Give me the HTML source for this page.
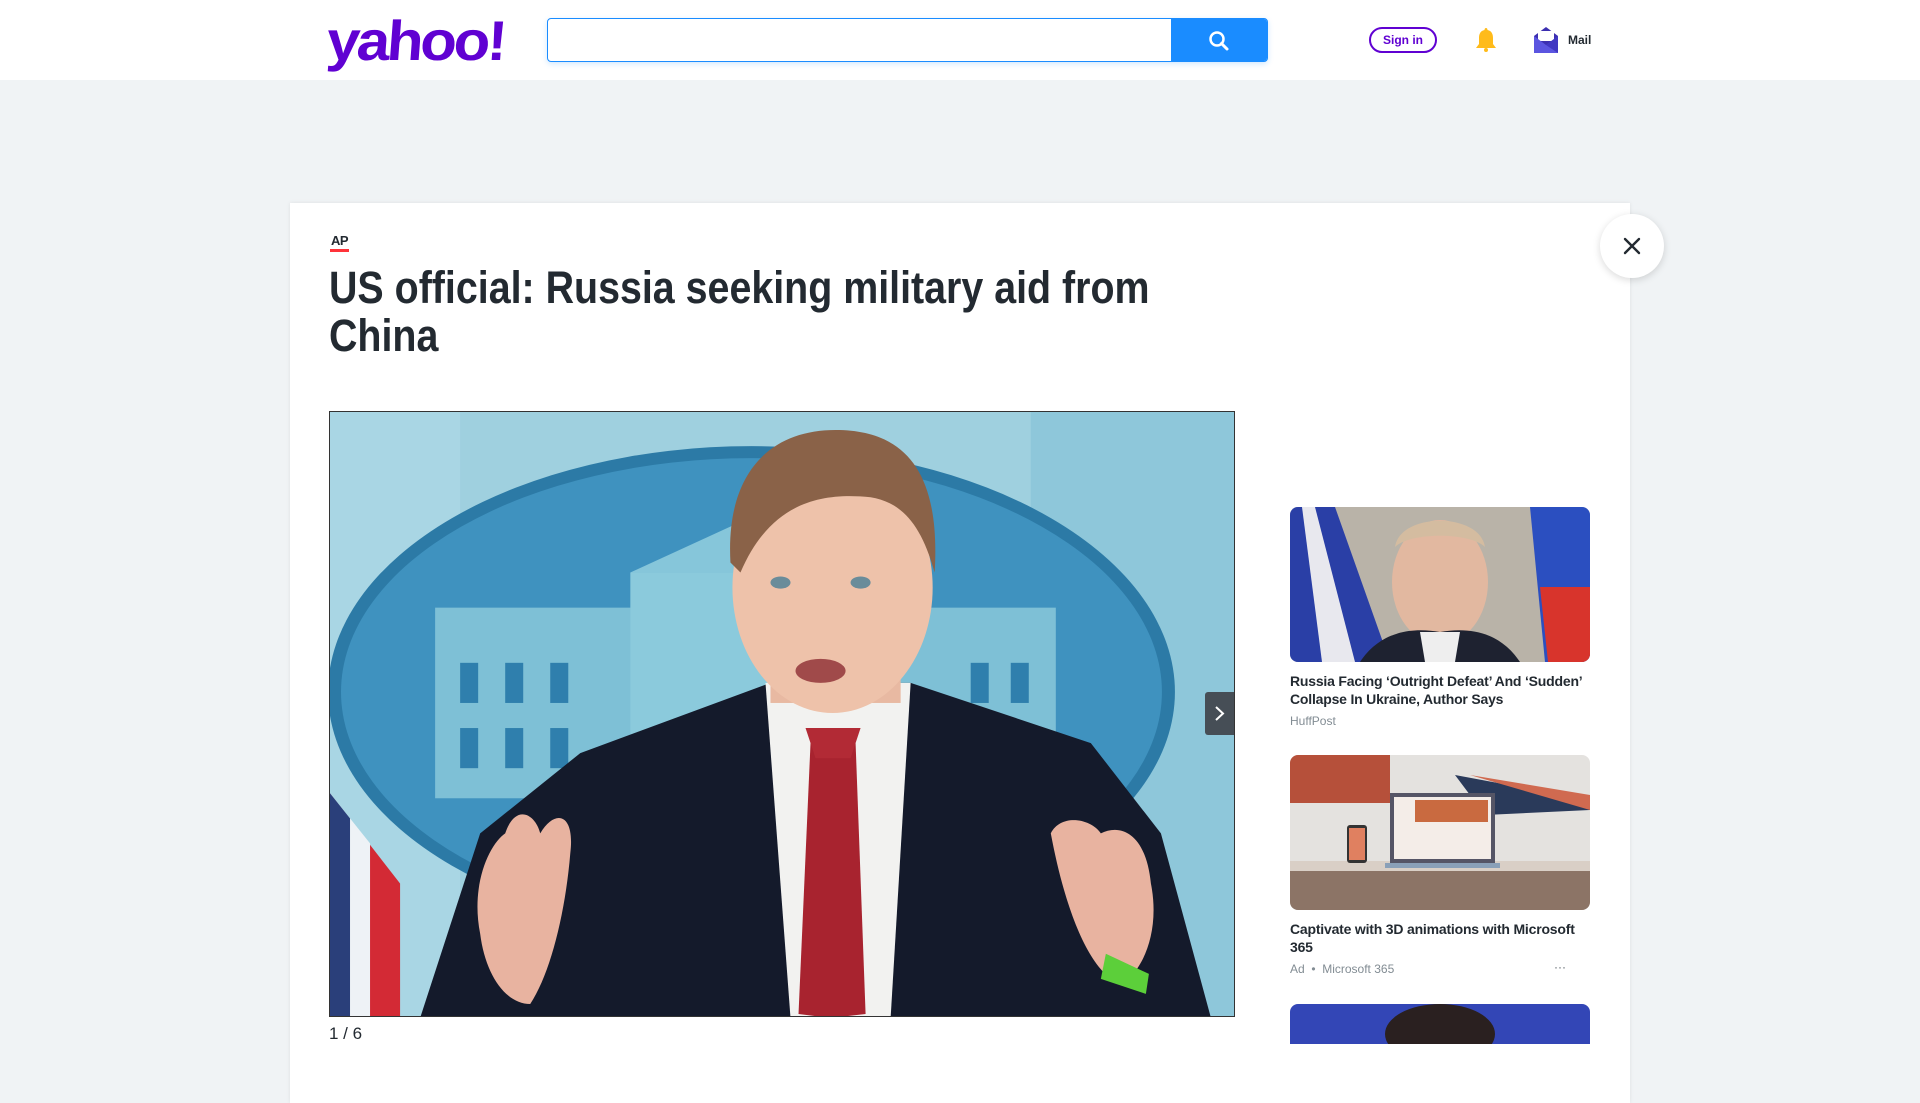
<!DOCTYPE html>
<html><head><meta charset="utf-8"><style>
*{margin:0;padding:0;box-sizing:border-box}
body{width:1920px;height:1040px;overflow:hidden;background:#f0f3f5;font-family:"Liberation Sans",sans-serif;position:relative}
.hdr{position:absolute;left:0;top:0;width:1920px;height:80px;background:#fff}
.logo{position:absolute;left:327px;top:8px;font-family:"Liberation Sans",sans-serif;font-weight:bold;font-size:56px;color:#6001d2;letter-spacing:-3px;transform:scaleX(1.07) skewX(-4deg);transform-origin:left}
.search{position:absolute;left:547px;top:18px;width:721px;height:44px;border:1px solid #1a8cff;border-radius:4px;box-shadow:0 2px 6px rgba(26,140,255,.2);background:#fff;overflow:hidden}
.sbtn{position:absolute;right:0;top:0;width:96px;height:44px;background:#1a8cff}
.signin{position:absolute;left:1369px;top:27px;width:68px;height:26px;border:2px solid #6001d2;border-radius:14px;color:#6001d2;font-size:12px;font-weight:bold;text-align:center;line-height:22px}
.mailt{position:absolute;left:1568px;top:33px;font-size:12px;font-weight:bold;color:#232a31}
.card{position:absolute;left:290px;top:203px;width:1340px;height:900px;background:#fff;box-shadow:0 0 4px rgba(0,0,0,.08)}
.close{position:absolute;left:1600px;top:214px;width:64px;height:64px;border-radius:50%;background:#fff;box-shadow:0 2px 8px rgba(0,0,0,.15)}
.ap{position:absolute;left:331px;top:233px;font-size:13px;font-weight:bold;color:#232a31;letter-spacing:-.5px}
.apl{position:absolute;left:330px;top:249px;width:19px;height:3px;background:#ff333a}
.h1{position:absolute;left:329px;font-weight:bold;font-size:45px;line-height:48px;color:#232a31;white-space:nowrap;transform:scaleX(.875);transform-origin:left}
.photo{position:absolute;left:329px;top:411px;width:906px;height:606px;border:1px solid #333;overflow:hidden}
.arrow{position:absolute;left:1205px;top:692px;width:29px;height:43px;background:#464e56;border-radius:3px 0 0 3px}
.cnt{position:absolute;left:329px;top:1024px;font-size:17px;color:#232a31}
.side{position:absolute;left:1290px;width:300px}
.thumb{border-radius:8px;overflow:hidden;height:155px}
.st{font-size:14px;font-weight:bold;color:#232a31;line-height:18px;margin-top:10px;letter-spacing:-.2px}
.src{font-size:12px;color:#828c93;margin-top:6px}
</style></head><body>
<div class="hdr">
<div class="logo">yahoo!</div>
<div class="search"><div class="sbtn"><svg width="96" height="44"><circle cx="46" cy="20" r="6.5" fill="none" stroke="#fff" stroke-width="2.5"/><path d="M50.5 24.5L56 30" stroke="#fff" stroke-width="3" stroke-linecap="round"/></svg></div></div>
<div class="signin">Sign in</div>
<svg style="position:absolute;left:1472px;top:26px" width="28" height="28"><path d="M14 2c-1 0-1.5 1-1.5 2C8 5 7 8.5 7 12v6l-3 4h20l-3-4v-6c0-3.5-1-7-5.5-8C15.5 3 15 2 14 2z" fill="#ffbb1a"/><rect x="12" y="22" width="4" height="4" rx="2" fill="#ffbb1a"/></svg>
<svg style="position:absolute;left:1533px;top:26px" width="26" height="28"><path d="M1 10L13 1l12 9v17H1z" fill="#3c2fb0"/><rect x="5" y="5" width="16" height="10" fill="#fff"/><path d="M1 10l12 9 12-9v17H1z" fill="#5b55e0"/><path d="M13 19l12-9v17z" fill="#4037c2"/></svg>
<div class="mailt">Mail</div>
</div>
<div class="card"></div>
<div class="close"><svg width="64" height="64"><path d="M25 25l14 14M39 25L25 39" stroke="#232a31" stroke-width="2.4" stroke-linecap="round"/></svg></div>
<div class="ap">AP</div><div class="apl"></div>
<div class="h1" style="top:264px">US official: Russia seeking military aid from</div>
<div class="h1" style="top:312px">China</div>
<div class="photo"><svg width="906" height="606" viewBox="0 0 905 604" preserveAspectRatio="none">
<rect width="905" height="604" fill="#9fd0df"/>
<rect x="0" y="0" width="130" height="604" fill="#a9d6e4"/>
<rect x="700" y="0" width="205" height="604" fill="#8ec7da"/>
<ellipse cx="421" cy="279" rx="423" ry="245" fill="#2c7aa6"/>
<ellipse cx="421" cy="279" rx="410" ry="233" fill="#3f92bf"/>
<rect x="105" y="195" width="620" height="190" fill="#7ec0d6"/>
<path d="M300 160l120-55 120 55z" fill="#86c6da"/>
<rect x="300" y="160" width="240" height="230" fill="#8bcadc"/>
<g fill="#2f7fad"><rect x="130" y="250" width="18" height="40"/><rect x="175" y="250" width="18" height="40"/><rect x="220" y="250" width="18" height="40"/><rect x="130" y="315" width="18" height="40"/><rect x="175" y="315" width="18" height="40"/><rect x="220" y="315" width="18" height="40"/><rect x="640" y="250" width="18" height="40"/><rect x="680" y="250" width="18" height="40"/></g>
<path d="M0 380L70 470V604H0z" fill="#d32a35"/><path d="M0 380L40 430V604H0z" fill="#eef2f6"/><path d="M0 380L20 405V604H0z" fill="#2a3f7a"/>
<path d="M90 604L150 420 250 340 440 270 580 270 760 330 830 420 880 604z" fill="#141a2b"/>
<path d="M435 270L580 270 560 604 460 604z" fill="#f2f2f0"/>
<path d="M480 330L525 330 535 600 500 604 468 600z" fill="#a8232f"/>
<path d="M475 315L530 315 520 345 485 345z" fill="#b22a35"/>
<rect x="440" y="220" width="130" height="70" fill="#e8b9a2"/>
<ellipse cx="502" cy="175" rx="100" ry="125" fill="#eec2aa"/>
<path d="M400 150C395 60 440 18 505 18 575 18 610 60 604 160 590 110 570 90 540 85 490 80 440 90 410 160z" fill="#8a6248"/>
<ellipse cx="450" cy="170" rx="10" ry="6" fill="#6a8c9a"/><ellipse cx="530" cy="170" rx="10" ry="6" fill="#6a8c9a"/>
<ellipse cx="490" cy="258" rx="25" ry="12" fill="#a04a4a"/>
<path d="M150 520C140 470 160 430 175 420 185 390 205 400 210 420 225 395 245 400 240 440 235 500 220 560 200 590 175 590 155 560 150 520z" fill="#e8b3a0"/>
<path d="M720 420C730 400 760 405 770 420 790 410 815 420 820 470 830 520 810 560 790 570 760 560 735 500 720 420z" fill="#e8b3a0"/>
<path d="M775 540L818 560 815 580 770 565z" fill="#5ccf3a"/>
</svg></div>
<div class="arrow"><svg width="29" height="43"><path d="M11 15l7 6.5-7 6.5" fill="none" stroke="#fff" stroke-width="2"/></svg></div>
<div class="cnt">1 / 6</div>
<div class="side" style="top:507px">
<div class="thumb"><svg width="300" height="155"><rect width="300" height="155" fill="#b9b3a8"/><path d="M0 0h45l55 155H0z" fill="#2a3fa6"/><path d="M0 0h25l40 155H0z" fill="#e8e8ee"/><path d="M0 0h12l20 155H0z" fill="#2a3fa6"/><path d="M240 0h60v155h-45z" fill="#2b4fc0"/><path d="M250 80h50v75h-42z" fill="#d8342c"/><ellipse cx="150" cy="75" rx="48" ry="62" fill="#e2b8a0"/><path d="M105 40C110 5 190 5 195 40 180 25 120 25 105 40z" fill="#d4bca0"/><path d="M70 155C90 125 120 120 150 125 180 120 210 125 230 155z" fill="#1e2230"/><path d="M130 125h40l-5 30h-30z" fill="#eee"/></svg></div>
<div class="st">Russia Facing ‘Outright Defeat’ And ‘Sudden’ Collapse In Ukraine, Author Says</div>
<div class="src">HuffPost</div>
</div>
<div class="side" style="top:755px">
<div class="thumb"><svg width="300" height="155"><rect width="300" height="155" fill="#e4e2df"/><rect x="0" y="0" width="100" height="48" fill="#b6503a"/><path d="M165 20L300 45 300 55 195 60z" fill="#2a3a5a"/><path d="M180 20L300 40 300 55z" fill="#d06a50"/><rect x="0" y="110" width="300" height="45" fill="#8c7466"/><rect x="0" y="106" width="300" height="10" fill="#d9cfc6"/><rect x="100" y="38" width="105" height="72" fill="#556" /><rect x="104" y="42" width="97" height="62" fill="#f4ede8"/><rect x="125" y="45" width="73" height="22" fill="#c96a40"/><rect x="95" y="108" width="115" height="5" fill="#8aa0b8"/><rect x="57" y="70" width="20" height="38" rx="3" fill="#333"/><rect x="59" y="73" width="16" height="32" fill="#e08060"/></svg></div>
<div class="st">Captivate with 3D animations with Microsoft 365</div>
<div class="src" style="position:relative">Ad &nbsp;•&nbsp; Microsoft 365<span style="position:absolute;right:24px;top:-2px;color:#5b636a">···</span></div>
</div>
<div style="position:absolute;left:1290px;top:1004px;width:300px;height:40px;border-radius:8px 8px 0 0;background:#3346b6;overflow:hidden"><div style="position:absolute;left:95px;top:0;width:110px;height:60px;border-radius:50%;background:#2a2020"></div></div>
</body></html>
